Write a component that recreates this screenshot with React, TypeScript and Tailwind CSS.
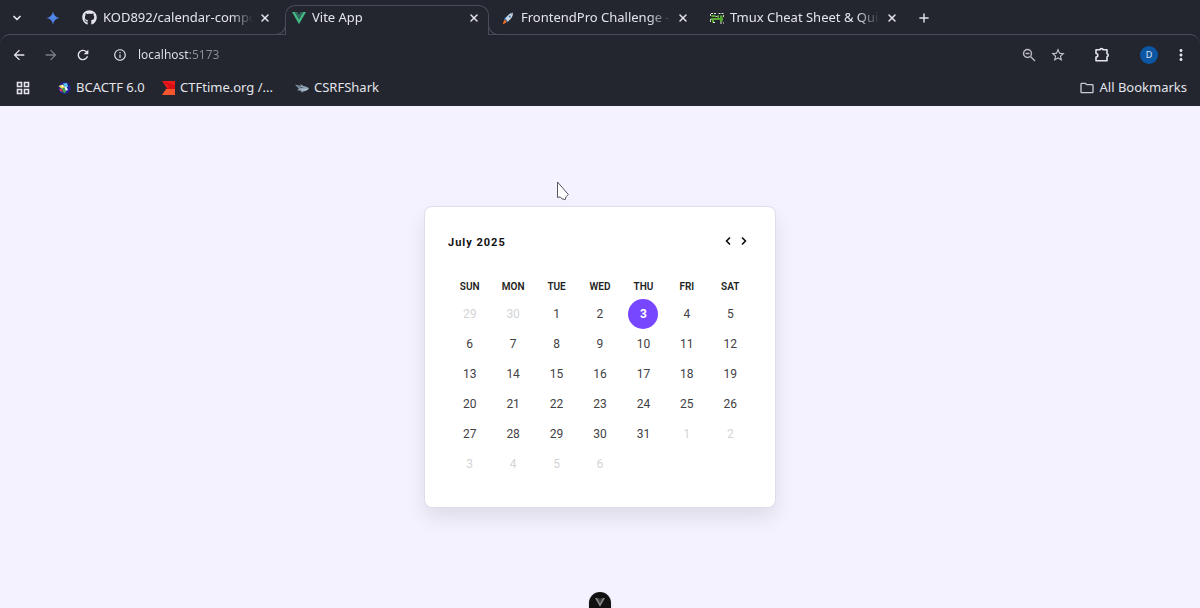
import { useState } from 'react'
import type { ReactNode } from 'react'
import { FaGithub } from 'react-icons/fa'
import { MdArrowBack, MdArrowForward, MdInfoOutline, MdMoreVert, MdOutlineFolder, MdRefresh, MdStarBorder } from 'react-icons/md'
import { ChevronDown, ChevronLeft, ChevronRight, Plus, X } from 'lucide-react'

/* Small drawings */

const SparkIcon = () => (
  <svg className="size-3.5" viewBox="0 0 24 24" fill="#4f86e8">
    <path d="M12 1c1.2 6.2 4.6 9.8 11 11-6.4 1.2-9.8 4.8-11 11-1.2-6.2-4.6-9.8-11-11C7.4 10.8 10.8 7.2 12 1z" />
  </svg>
)

const VueIcon = ({ className, outer, inner }: { className: string; outer: string; inner: string }) => (
  <svg className={className} viewBox="0 0 24 21">
    <path d="M19.1 0 12 12.3 4.9 0H0l12 20.8L24 0z" fill={outer} />
    <path d="M19.1 0h-4.4L12 4.700 9.300 0H4.900L12 12.300z" fill={inner} />
  </svg>
)

const RocketIcon = () => (
  <svg className="size-3" viewBox="1 1 14 14">
    <path d="M3 9.5 6.5 6l3 1.5-.5 4-2.500 2-.5-3z" fill="#3f86c9" />
    <path d="M13.5 2c.6 3-.8 6.500-5.500 9.800L5 9C7.500 4.500 10.500 2.200 13.500 2z" fill="#cfd9e2" />
    <path d="M13.5 2c.1 1.100 0 2.200-.5 3.200l-2.200-2.300c.9-.5 1.800-.8 2.700-.9z" fill="#8fa6b8" />
    <circle cx="10" cy="6.2" r="1.2" fill="#2d6da8" />
    <path d="m4.500 10 2 2C5.500 13.800 4 14.600 2 15c.2-2 .9-3.800 2.500-5z" fill="#f36c21" />
  </svg>
)

const TmuxIcon = () => (
  <svg className="h-3 w-3.5" viewBox="0 0 14 12">
    <path d="M1.500 3h4v2h-4zM1 6h12v2H1zM7.500 3H9v5H7.500zM10 3.500h2.500V10H10zM2 8h2v2.500H2z" fill="#57a531" />
    <path d="M1 1.500h5M8.500 1.500H14M3 10.500h3M10 11h4" stroke="#e3ecdf" strokeDasharray="2 1" />
    <path d="M.5 2v2M.5 7v3M13.500 3v2M5.500 4.500h2" stroke="#c9d8c0" />
  </svg>
)

const BallIcon = () => (
  <svg className="size-3.5" viewBox="0 0 14 14">
    <circle cx="7.5" cy="7" r="6" fill="#23209a" />
    <path d="m1.500 5 4-1.500L8 6 5 8z" fill="#e8e04a" />
    <path d="m6 2.500 4-.5 1 4-3 0z" fill="#57c7e8" />
    <path d="m7 5.500 2.500.5 1.500 3-2.500 1z" fill="#f2f4ff" />
    <path d="m5 8 2.500-1.500L9 11l-2 1.500z" fill="#39a845" />
    <path d="m2 7.500 3 .5 1 3-3-1z" fill="#d7385e" />
    <circle cx="5.5" cy="5" r="1" fill="#ffffff" />
  </svg>
)

const CtfTimeIcon = () => (
  <svg className="h-3.5 w-[13px]" viewBox="0 0 13 14">
    <path d="M0 0h13v14H0l5.500-6z" fill="#ee1c1c" />
    <path d="M4 8h9v6H0z" fill="#f4552f" />
    <path d="m0 0 7 5.500L4 8h9V4z" fill="#d90f18" />
  </svg>
)

const SharkIcon = () => (
  <svg className="h-[10px] w-3.5" viewBox="0 0 14 10">
    <path d="M0 1.500 6 3l-1-2 4 2.300c2.500.2 4 1 5 2.200-1.200 1.800-3 2.700-5.500 2.900L6 9.500l.2-1.700L2 7.200l2-1.500z" fill="#8fa3b4" />
    <path d="M5 6.500c3 .5 6 .2 8-1-1.500 1.700-5 2.500-8 1z" fill="#eef4f8" />
    <path d="M1 2.200 6 4l3 .3-3 .9z" fill="#46586a" />
  </svg>
)

const AppsIcon = () => (
  <svg className="size-3.5" viewBox="0 0 14 14" fill="none" stroke="currentColor" strokeWidth="1.6">
    <path d="M1.500 1.500H5.500V5.500H1.500zM8.500 1.500H12.500V5.500H8.500zM1.500 8.500H5.500V12.500H1.500zM8.500 8.500H12.500V12.500H8.500z" />
  </svg>
)

const ZoomOutIcon = () => (
  <svg className="size-3.5" viewBox="0 0 14 14" fill="none" stroke="currentColor" strokeWidth="1.4">
    <circle cx="5.5" cy="5.5" r="4" />
    <path d="M3.500 5.500h4M8.500 8.500 13 13" />
  </svg>
)

const PuzzleIcon = () => (
  <svg className="size-4" viewBox="0 0 16 16" fill="none" stroke="currentColor" strokeWidth="1.6" strokeLinejoin="round">
    <path d="M2 2.800h4a1.500 1.200 0 0 1 3 0h4v4a1.200 1.500 0 0 1 0 3v4H2v-3.700a1.800 1.800 0 0 0 0-3.600z" />
  </svg>
)

const Cursor = () => (
  <svg className="absolute top-[75px] left-[556px] h-5 w-3.5" viewBox="0 0 14 20">
    <path d="M1.500 1v15.500l2.800-.6 1.700 2 3.200.6.800-2.700 2.300-2.300z" fill="#fff" stroke="#55555c" />
  </svg>
)

/* Browser window */

const tabs = [
  { title: 'KOD892/calendar-component', icon: <FaGithub className="size-[15px]" />, active: false },
  { title: 'Vite App', icon: <VueIcon className="w-3.5" outer="#41b883" inner="#34695e" />, active: true },
  { title: 'FrontendPro Challenge - Calendar', icon: <RocketIcon />, active: false },
  { title: 'Tmux Cheat Sheet & Quick Reference', icon: <TmuxIcon />, active: false },
]

const bookmarks = [
  { name: 'BCACTF 6.0', icon: <BallIcon />, width: 'w-[89px]' },
  { name: 'CTFtime.org /...', icon: <CtfTimeIcon />, width: 'w-[117px]' },
  { name: 'CSRFShark', icon: <SharkIcon />, width: '' },
]

const Tab = ({ title, icon, active }: { title: string; icon: ReactNode; active: boolean }) => (
  <div
    className={
      active
        ? 'relative z-10 mt-[5px] flex h-[30px] w-[204px] items-center rounded-t-[10px] border border-b-0 border-[#4a4c57] bg-[#24262f] pr-2 pb-[5px] pl-[5px]'
        : 'flex h-[35px] w-[204px] items-center pr-[9px] pl-[6px]'
    }
  >
    <span className="flex w-[15px] shrink-0 justify-center">{icon}</span>
    <span className="ml-1.5 flex-1 overflow-hidden whitespace-nowrap [mask-image:linear-gradient(to_right,#000_85%,transparent)]">
      {title}
    </span>
    <button aria-label={`Close ${title}`} className="ml-1.5 flex size-3 items-center justify-center">
      <X className="size-3" strokeWidth={3} />
    </button>
    {active && (
      <>
        <span className="absolute bottom-0 -left-[10px] size-[10px] rounded-br-[10px] border-r border-b border-[#4a4c57]" />
        <span className="absolute -right-[10px] bottom-0 size-[10px] rounded-bl-[10px] border-b border-l border-[#4a4c57]" />
      </>
    )}
  </div>
)

const Browser = () => (
  <header className="bg-[#24262f] font-['Noto_Sans',sans-serif] text-[13px] text-[#e3e4ec]">
    <div className="flex h-[34px] items-start">
      <button aria-label="Search tabs" className="flex h-[35px] w-[34px] items-center justify-center">
        <ChevronDown className="size-3" strokeWidth={3.5} />
      </button>
      <span className="flex h-[35px] w-[42px] items-center justify-center pr-1">
        <SparkIcon />
      </span>
      <div className="flex gap-[5px]">
        {tabs.map((tab) => (
          <Tab key={tab.title} {...tab} />
        ))}
      </div>
      <button aria-label="New tab" className="ml-[7px] flex h-[35px] w-5 items-center justify-center">
        <Plus className="size-3.5" strokeWidth={2.5} />
      </button>
    </div>

    <div className="flex h-[41px] items-center rounded-t-[10px] border-t border-[#4a4c57] pr-2.5 pl-[11px]">
      <button aria-label="Back">
        <MdArrowBack className="size-4" />
      </button>
      <button aria-label="Forward" className="ml-4 text-[#7b7d87]">
        <MdArrowForward className="size-4" />
      </button>
      <button aria-label="Reload" className="ml-4">
        <MdRefresh className="size-4" />
      </button>
      <button aria-label="Site information" className="ml-[22px]">
        <MdInfoOutline className="size-3.5" />
      </button>
      <input
        aria-label="Address"
        defaultValue="localhost:5173"
        className="ml-[11px] min-w-0 flex-1 bg-linear-to-r from-[#e3e4ec] from-[52px] to-[#8b8d97] to-[52px] bg-clip-text text-xs text-transparent outline-none"
      />
      <button aria-label="Zoom" className="text-[#b9bac3]">
        <ZoomOutIcon />
      </button>
      <button aria-label="Bookmark this page" className="ml-3.5 text-[#c9cad2]">
        <MdStarBorder className="size-4" />
      </button>
      <button aria-label="Extensions" className="ml-7">
        <PuzzleIcon />
      </button>
      <button aria-label="Profile" className="ml-[30px] flex size-[18px] items-center justify-center rounded-full bg-[#0b57a4] text-[9px]">
        D
      </button>
      <button aria-label="Menu" className="ml-3.5">
        <MdMoreVert className="size-[18px]" />
      </button>
    </div>

    <nav className="flex items-center pr-[13px] pb-[5px] pl-4">
      <button aria-label="Apps">
        <AppsIcon />
      </button>
      <div className="ml-[27px] flex gap-4">
        {bookmarks.map((bookmark) => (
          <a key={bookmark.name} href="#" className={`flex h-[26px] items-center gap-[5px] whitespace-nowrap ${bookmark.width}`}>
            {bookmark.icon}
            {bookmark.name}
          </a>
        ))}
      </div>
      <button className="ml-auto flex items-center gap-1">
        <MdOutlineFolder className="size-4 text-[#c9cad2]" />
        All Bookmarks
      </button>
    </nav>
  </header>
)

/* Calendar */

const weekdays = ['SUN', 'MON', 'TUE', 'WED', 'THU', 'FRI', 'SAT']

const getWeeks = (year: number, month: number) => {
  const lead = new Date(year, month, 1).getDay()
  const total = new Date(year, month + 1, 0).getDate()
  // six days of the next month close the grid
  const days = Array.from({ length: lead + total + 6 }, (_, i) => new Date(year, month, i - lead + 1))
  const weeks: Date[][] = []
  for (let i = 0; i < days.length; i += 7) weeks.push(days.slice(i, i + 7))
  return weeks
}

const Calendar = () => {
  const [shown, setShown] = useState(new Date(2025, 6, 1))
  const [selected, setSelected] = useState(new Date(2025, 6, 3))
  const year = shown.getFullYear()
  const month = shown.getMonth()

  const dayClass = (day: Date) => {
    if (day.getTime() === selected.getTime()) return 'bg-[#7747ff] font-bold text-white'
    return day.getMonth() === month ? 'text-[#3f4145]' : 'text-[#d3d4d6]'
  }

  return (
    <section className="w-full max-w-[352px] rounded-lg border border-[#dfdde9] bg-white px-[23px] pt-6 pb-7 font-[Roboto,sans-serif] shadow-[0_10px_20px_rgba(0,0,0,0.09)]">
      <div className="flex h-[22px] items-start justify-between">
        <h1 className="text-[11px] leading-6 font-bold tracking-[1px] text-[#111]">
          {shown.toLocaleDateString('en-US', { month: 'long', year: 'numeric' })}
        </h1>
        <div className="mr-0.5 flex h-5 items-center gap-1 text-[#111]">
          <button aria-label="Previous month" onClick={() => setShown(new Date(year, month - 1, 1))}>
            <ChevronLeft className="size-3" strokeWidth={3.5} />
          </button>
          <button aria-label="Next month" onClick={() => setShown(new Date(year, month + 1, 1))}>
            <ChevronRight className="size-3" strokeWidth={3.5} />
          </button>
        </div>
      </div>

      <table className="mt-6 w-full table-fixed text-center">
        <thead>
          <tr>
            {weekdays.map((weekday) => (
              <th key={weekday} scope="col" className="h-[22px] p-0 pb-0.5 text-[10px] leading-none font-semibold text-[#222]">
                {weekday}
              </th>
            ))}
          </tr>
        </thead>
        <tbody>
          {getWeeks(year, month).map((week) => (
            <tr key={week[0].getTime()}>
              {week.map((day) => (
                <td key={day.getTime()} className="p-0">
                  <button
                    onClick={() => setSelected(day)}
                    className={`mx-auto flex size-[30px] items-center justify-center rounded-full text-xs ${dayClass(day)}`}
                  >
                    {day.getDate()}
                  </button>
                </td>
              ))}
            </tr>
          ))}
        </tbody>
      </table>
    </section>
  )
}

const App = () => {
  return (
    <div className="flex min-h-screen flex-col">
      <Browser />
      <main className="relative flex flex-1 items-center justify-center overflow-hidden bg-[#f4f2ff]">
        <Calendar />
        <Cursor />
        <button
          aria-label="Vue DevTools"
          className="absolute -bottom-2 left-1/2 flex h-6 w-[22px] -translate-x-1/2 items-start justify-center rounded-t-full bg-[#111] pt-1.5 shadow"
        >
          <VueIcon className="w-2.5" outer="#8a8a8a" inner="#4a4a4a" />
        </button>
      </main>
    </div>
  )
}

export default App
